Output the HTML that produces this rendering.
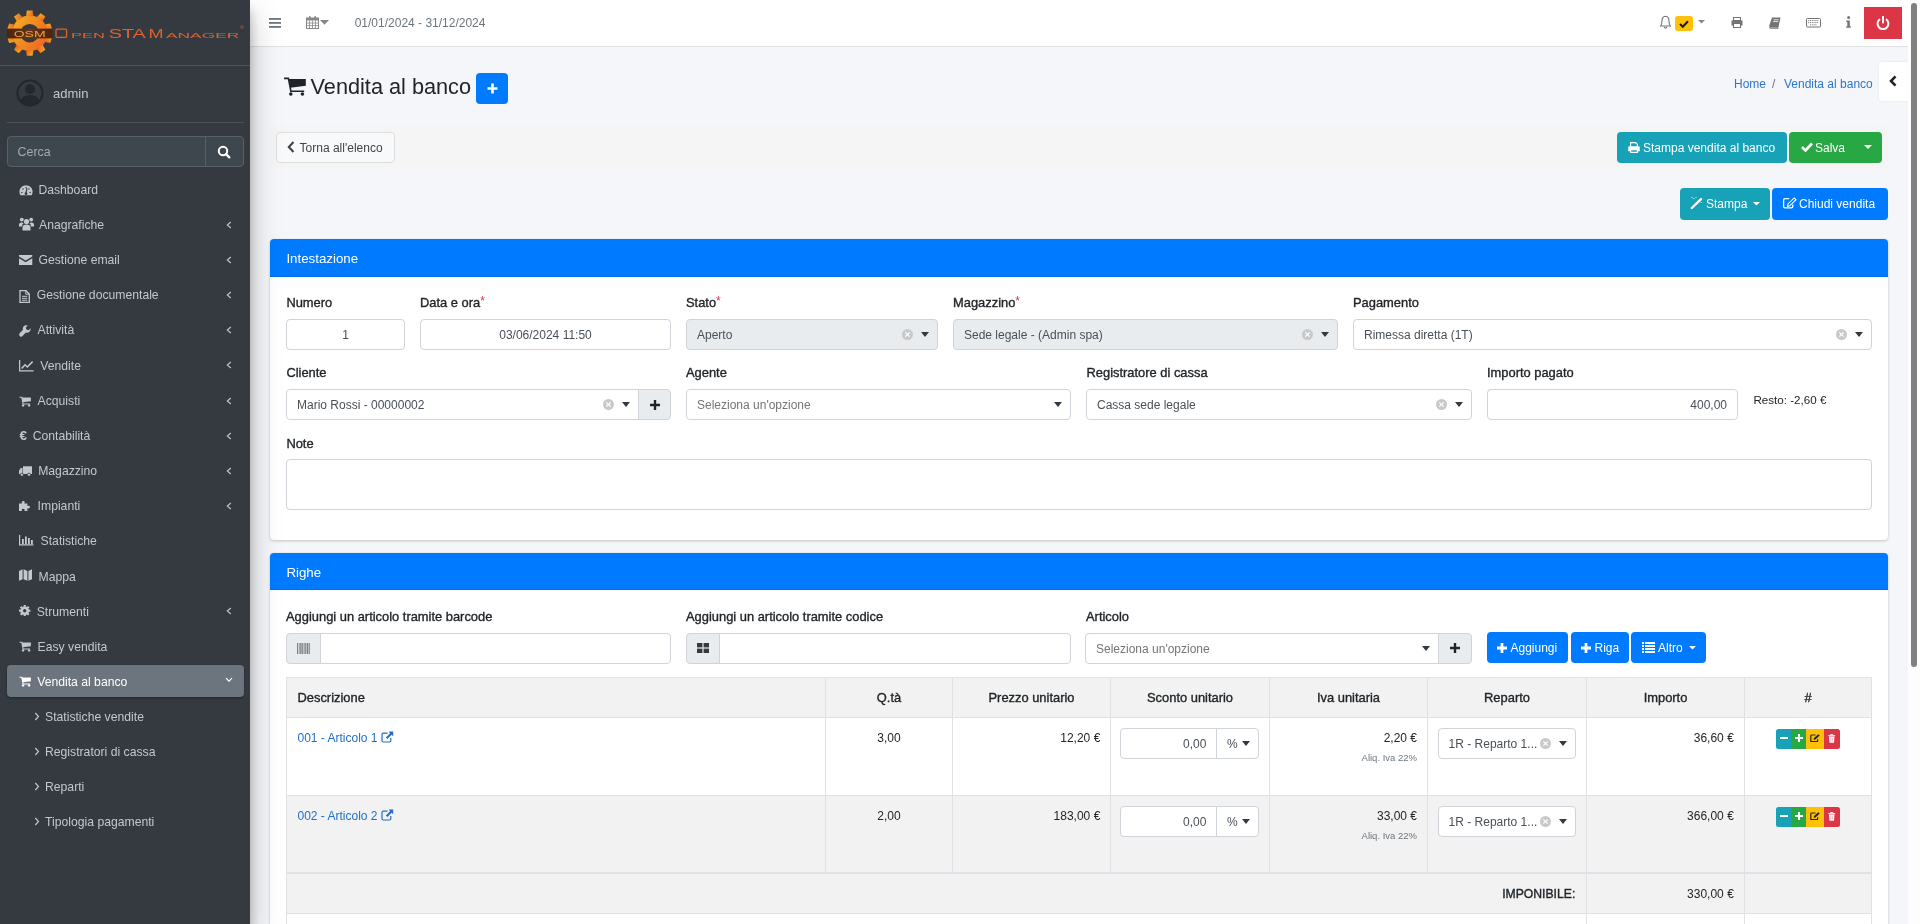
<!DOCTYPE html>
<html><head><meta charset="utf-8"><title>Vendita al banco</title>
<style>
html,body{margin:0;padding:0;width:1920px;height:924px;overflow:hidden;background:#f4f6f9;font-family:"Liberation Sans",sans-serif;}
.t{position:absolute;white-space:nowrap;}
.b{position:absolute;box-sizing:border-box;}
</style></head><body><div style="position:absolute;left:0;top:0;width:1920px;height:924px;will-change:transform">
<div class="b" style="left:0px;top:0px;width:250px;height:924px;background:#343a40;box-shadow:0 14px 28px rgba(0,0,0,.25),0 10px 10px rgba(0,0,0,.22);z-index:5;"></div>
<div class="b" style="left:0px;top:65px;width:250px;height:1px;background:#4b545c;z-index:6;"></div>
<svg class="b" style="left:0px;top:0px;z-index:6" width="250" height="65" viewBox="0 0 250 65">
<defs><linearGradient id="g1" x1="0" y1="0" x2="1" y2="0.6"><stop offset="0" stop-color="#f6b21c"/><stop offset="1" stop-color="#ee6a24"/></linearGradient>
<linearGradient id="g2" x1="0" y1="0" x2="1" y2="0"><stop offset="0" stop-color="#4a2410"/><stop offset=".5" stop-color="#6a3414"/><stop offset="1" stop-color="#4a2410"/></linearGradient></defs>
<g transform="translate(29.7,33.2)">
<g fill="url(#g1)" transform="translate(-29.5,-32.7)"><g transform="translate(29.5,32.7)">
<circle r="17.8"/><path d="M-3.6 -17 L-2.9 -22.6 L2.9 -22.6 L3.6 -17Z" transform="rotate(0)"/><path d="M-3.6 -17 L-2.9 -22.6 L2.9 -22.6 L3.6 -17Z" transform="rotate(36)"/><path d="M-3.6 -17 L-2.9 -22.6 L2.9 -22.6 L3.6 -17Z" transform="rotate(72)"/><path d="M-3.6 -17 L-2.9 -22.6 L2.9 -22.6 L3.6 -17Z" transform="rotate(108)"/><path d="M-3.6 -17 L-2.9 -22.6 L2.9 -22.6 L3.6 -17Z" transform="rotate(144)"/><path d="M-3.6 -17 L-2.9 -22.6 L2.9 -22.6 L3.6 -17Z" transform="rotate(180)"/><path d="M-3.6 -17 L-2.9 -22.6 L2.9 -22.6 L3.6 -17Z" transform="rotate(216)"/><path d="M-3.6 -17 L-2.9 -22.6 L2.9 -22.6 L3.6 -17Z" transform="rotate(252)"/><path d="M-3.6 -17 L-2.9 -22.6 L2.9 -22.6 L3.6 -17Z" transform="rotate(288)"/><path d="M-3.6 -17 L-2.9 -22.6 L2.9 -22.6 L3.6 -17Z" transform="rotate(324)"/>
</g></g>
<circle r="9.3" fill="#343a40"/>
<rect x="-22.7" y="-4.6" width="45.4" height="9.8" fill="url(#g2)"/>
<text x="0" y="4.1" text-anchor="middle" font-family="Liberation Sans" font-size="9.6" fill="#eea040" textLength="32" lengthAdjust="spacingAndGlyphs">OSM</text>
</g>
<g font-family="Liberation Sans" fill="#e4602a" stroke="#e4602a" stroke-width="0">
<rect x="56" y="29.2" width="10.6" height="8.2" rx="1.2" fill="none" stroke-width="1.3"/>
<text x="71" y="37.9" font-size="7.8" textLength="33.8" lengthAdjust="spacingAndGlyphs">PEN</text>
<text x="108.7" y="37.9" font-size="13.7" textLength="37.1" lengthAdjust="spacingAndGlyphs">STA</text>
<text x="148.4" y="37.9" font-size="13.7" textLength="15" lengthAdjust="spacingAndGlyphs">M</text>
<text x="166" y="37.9" font-size="7.8" textLength="73.3" lengthAdjust="spacingAndGlyphs">ANAGER</text>
<circle cx="242" cy="27" r="1.3" fill="none" stroke-width=".5"/>
</g></svg>
<svg class="b" style="left:16px;top:79px;z-index:6" width="28" height="28" viewBox="0 0 28 28">
<circle cx="14" cy="14" r="12.5" fill="none" stroke="#24282c" stroke-width="2.2"/>
<circle cx="14" cy="10.2" r="4.9" fill="#24282c"/>
<path d="M4.6 22.4 Q6 16 14 16 Q22 16 23.4 22.4 Q14 29 4.6 22.4Z" fill="#24282c"/>
</svg>
<div class="t" style="top:87.00px;font-size:13px;line-height:13px;color:#c2c7d0;font-weight:400;left:53px;z-index:6;">admin</div>
<div class="b" style="left:7px;top:122px;width:237px;height:1px;background:#4b545c;z-index:6;"></div>
<div class="b" style="left:7px;top:136px;width:237px;height:31px;background:#3f474e;border:1px solid #56606a;border-radius:4px;z-index:6;"></div>
<div class="b" style="left:205px;top:137px;width:1px;height:29px;background:#56606a;z-index:6;"></div>
<div class="t" style="top:145.50px;font-size:12.4px;line-height:12.4px;color:#a3a9ae;font-weight:400;left:17.6px;z-index:6;">Cerca</div>
<svg class="b" style="left:217px;top:145px;z-index:6" width="14" height="14" viewBox="0 0 14 14">
<circle cx="6" cy="6" r="4.2" fill="none" stroke="#fff" stroke-width="2"/><path d="M9 9 L12.3 12.3" stroke="#fff" stroke-width="2.4" stroke-linecap="round"/></svg>
<div class="b" style="left:7px;top:665px;width:237px;height:32px;background:#6c757d;border-radius:4px;z-index:6;box-shadow:0 1px 3px rgba(0,0,0,.12),0 1px 2px rgba(0,0,0,.24);"></div>
<div class="t" style="top:183.87px;font-size:12.2px;line-height:12.2px;color:#c2c7d0;font-weight:400;left:38.4px;z-index:7;">Dashboard</div>
<div class="t" style="top:219.02px;font-size:12.2px;line-height:12.2px;color:#c2c7d0;font-weight:400;left:39px;z-index:7;">Anagrafiche</div>
<svg class="b" style="left:225.5px;top:220.75px;z-index:7;" width="6" height="8" viewBox="0 0 6 8"><path d="M4.8 1 L1.3 4 L4.8 7" fill="none" stroke="#c2c7d0" stroke-width="1.1"/></svg>
<div class="t" style="top:254.17px;font-size:12.2px;line-height:12.2px;color:#c2c7d0;font-weight:400;left:38.5px;z-index:7;">Gestione email</div>
<svg class="b" style="left:225.5px;top:255.9px;z-index:7;" width="6" height="8" viewBox="0 0 6 8"><path d="M4.8 1 L1.3 4 L4.8 7" fill="none" stroke="#c2c7d0" stroke-width="1.1"/></svg>
<div class="t" style="top:289.32px;font-size:12.2px;line-height:12.2px;color:#c2c7d0;font-weight:400;left:36.7px;z-index:7;">Gestione documentale</div>
<svg class="b" style="left:225.5px;top:291.04999999999995px;z-index:7;" width="6" height="8" viewBox="0 0 6 8"><path d="M4.8 1 L1.3 4 L4.8 7" fill="none" stroke="#c2c7d0" stroke-width="1.1"/></svg>
<div class="t" style="top:324.47px;font-size:12.2px;line-height:12.2px;color:#c2c7d0;font-weight:400;left:37.6px;z-index:7;">Attività</div>
<svg class="b" style="left:225.5px;top:326.19999999999993px;z-index:7;" width="6" height="8" viewBox="0 0 6 8"><path d="M4.8 1 L1.3 4 L4.8 7" fill="none" stroke="#c2c7d0" stroke-width="1.1"/></svg>
<div class="t" style="top:359.62px;font-size:12.2px;line-height:12.2px;color:#c2c7d0;font-weight:400;left:40.3px;z-index:7;">Vendite</div>
<svg class="b" style="left:225.5px;top:361.34999999999997px;z-index:7;" width="6" height="8" viewBox="0 0 6 8"><path d="M4.8 1 L1.3 4 L4.8 7" fill="none" stroke="#c2c7d0" stroke-width="1.1"/></svg>
<div class="t" style="top:394.77px;font-size:12.2px;line-height:12.2px;color:#c2c7d0;font-weight:400;left:37.6px;z-index:7;">Acquisti</div>
<svg class="b" style="left:225.5px;top:396.49999999999994px;z-index:7;" width="6" height="8" viewBox="0 0 6 8"><path d="M4.8 1 L1.3 4 L4.8 7" fill="none" stroke="#c2c7d0" stroke-width="1.1"/></svg>
<div class="t" style="top:429.92px;font-size:12.2px;line-height:12.2px;color:#c2c7d0;font-weight:400;left:32.7px;z-index:7;">Contabilità</div>
<svg class="b" style="left:225.5px;top:431.65px;z-index:7;" width="6" height="8" viewBox="0 0 6 8"><path d="M4.8 1 L1.3 4 L4.8 7" fill="none" stroke="#c2c7d0" stroke-width="1.1"/></svg>
<div class="t" style="top:465.07px;font-size:12.2px;line-height:12.2px;color:#c2c7d0;font-weight:400;left:38.2px;z-index:7;">Magazzino</div>
<svg class="b" style="left:225.5px;top:466.79999999999995px;z-index:7;" width="6" height="8" viewBox="0 0 6 8"><path d="M4.8 1 L1.3 4 L4.8 7" fill="none" stroke="#c2c7d0" stroke-width="1.1"/></svg>
<div class="t" style="top:500.22px;font-size:12.2px;line-height:12.2px;color:#c2c7d0;font-weight:400;left:37.6px;z-index:7;">Impianti</div>
<svg class="b" style="left:225.5px;top:501.94999999999993px;z-index:7;" width="6" height="8" viewBox="0 0 6 8"><path d="M4.8 1 L1.3 4 L4.8 7" fill="none" stroke="#c2c7d0" stroke-width="1.1"/></svg>
<div class="t" style="top:535.37px;font-size:12.2px;line-height:12.2px;color:#c2c7d0;font-weight:400;left:40.6px;z-index:7;">Statistiche</div>
<div class="t" style="top:570.52px;font-size:12.2px;line-height:12.2px;color:#c2c7d0;font-weight:400;left:38.5px;z-index:7;">Mappa</div>
<div class="t" style="top:605.67px;font-size:12.2px;line-height:12.2px;color:#c2c7d0;font-weight:400;left:36.7px;z-index:7;">Strumenti</div>
<svg class="b" style="left:225.5px;top:607.4px;z-index:7;" width="6" height="8" viewBox="0 0 6 8"><path d="M4.8 1 L1.3 4 L4.8 7" fill="none" stroke="#c2c7d0" stroke-width="1.1"/></svg>
<div class="t" style="top:640.82px;font-size:12.2px;line-height:12.2px;color:#c2c7d0;font-weight:400;left:37.6px;z-index:7;">Easy vendita</div>
<div class="t" style="top:675.97px;font-size:12.2px;line-height:12.2px;color:#fff;font-weight:400;left:37.2px;z-index:7;">Vendita al banco</div>
<svg class="b" style="left:224.5px;top:677px;z-index:7;" width="8" height="6" viewBox="0 0 8 6"><path d="M1 1.2 L4 4.2 L7 1.2" fill="none" stroke="#fff" stroke-width="1.2"/></svg>
<div class="t" style="top:710.67px;font-size:12.2px;line-height:12.2px;color:#c2c7d0;font-weight:400;left:45px;z-index:7;">Statistiche vendite</div>
<svg class="b" style="left:34px;top:712px;z-index:7;" width="6" height="9" viewBox="0 0 6 9"><path d="M1.3 1 L4.5 4.5 L1.3 8" fill="none" stroke="#c2c7d0" stroke-width="1.2"/></svg>
<div class="t" style="top:745.67px;font-size:12.2px;line-height:12.2px;color:#c2c7d0;font-weight:400;left:45px;z-index:7;">Registratori di cassa</div>
<svg class="b" style="left:34px;top:747px;z-index:7;" width="6" height="9" viewBox="0 0 6 9"><path d="M1.3 1 L4.5 4.5 L1.3 8" fill="none" stroke="#c2c7d0" stroke-width="1.2"/></svg>
<div class="t" style="top:780.67px;font-size:12.2px;line-height:12.2px;color:#c2c7d0;font-weight:400;left:45px;z-index:7;">Reparti</div>
<svg class="b" style="left:34px;top:782px;z-index:7;" width="6" height="9" viewBox="0 0 6 9"><path d="M1.3 1 L4.5 4.5 L1.3 8" fill="none" stroke="#c2c7d0" stroke-width="1.2"/></svg>
<div class="t" style="top:815.67px;font-size:12.2px;line-height:12.2px;color:#c2c7d0;font-weight:400;left:45px;z-index:7;">Tipologia pagamenti</div>
<svg class="b" style="left:34px;top:817px;z-index:7;" width="6" height="9" viewBox="0 0 6 9"><path d="M1.3 1 L4.5 4.5 L1.3 8" fill="none" stroke="#c2c7d0" stroke-width="1.2"/></svg>
<svg class="b" style="left:19px;top:184.5px;z-index:7;" width="14" height="11" viewBox="0 0 14 11"><path d="M1.4 10.3 A6.6 6.6 0 1 1 12.6 10.3 Z" fill="#c2c7d0"/><path d="M7 8.6 L7.9 3.2" stroke="#343a40" stroke-width="1.2"/><circle cx="7" cy="8.7" r="1.4" fill="#343a40"/><circle cx="2.9" cy="7.6" r=".75" fill="#343a40"/><circle cx="4" cy="3.9" r=".75" fill="#343a40"/><circle cx="11.1" cy="7.6" r=".75" fill="#343a40"/><circle cx="10" cy="3.9" r=".75" fill="#343a40"/><circle cx="7" cy="2.5" r=".7" fill="#343a40"/></svg>
<svg class="b" style="left:19px;top:217px;z-index:7;" width="15" height="14" viewBox="0 0 15 14"><circle cx="7.5" cy="4.5" r="2.6" fill="#c2c7d0"/><circle cx="2.8" cy="2.6" r="1.9" fill="#c2c7d0"/><circle cx="12.2" cy="2.6" r="1.9" fill="#c2c7d0"/><path d="M3.5 13.5 V10.5 Q3.5 7.6 7.5 7.6 Q11.5 7.6 11.5 10.5 V13.5Z" fill="#c2c7d0"/><path d="M0 9.5 V7.2 Q0 5.4 2.8 5.4 Q4 5.4 4.6 6 Q3 7.2 3 9.5Z" fill="#c2c7d0"/><path d="M15 9.5 V7.2 Q15 5.4 12.2 5.4 Q11 5.4 10.4 6 Q12 7.2 12 9.5Z" fill="#c2c7d0"/></svg>
<svg class="b" style="left:19.4px;top:255px;z-index:7;" width="13.3" height="10" viewBox="0 0 13.3 10"><path d="M0 0 H13.3 V1.6 L6.65 5.6 L0 1.6Z" fill="#c2c7d0"/><path d="M0 3.2 L6.65 7.2 L13.3 3.2 V10 H0Z" fill="#c2c7d0"/></svg>
<svg class="b" style="left:19.4px;top:290px;z-index:7;" width="11" height="13" viewBox="0 0 11 13"><path d="M1 0.7 H7 L10.3 4 V12.3 H1Z" fill="none" stroke="#c2c7d0" stroke-width="1.3"/><path d="M6.8 0.7 V4.2 H10.3" fill="none" stroke="#c2c7d0" stroke-width="1"/><path d="M3 6.3 H8.3 M3 8.3 H8.3 M3 10.3 H8.3" stroke="#c2c7d0" stroke-width="1"/></svg>
<svg class="b" style="left:19.4px;top:324.5px;z-index:7;" width="12" height="12" viewBox="0 0 12 12"><path d="M11.6 3.2 L9.6 5.2 L7.4 4.6 L6.8 2.4 L8.8 0.4 Q6.4 -0.4 4.8 1.2 Q3.4 2.6 4 4.8 L0.6 8.2 Q-0.2 9.2 0.6 10.9 Q1.8 12.2 3 11.4 L6.9 7.5 Q9 8.1 10.4 6.7 Q12 5.1 11.6 3.2Z" fill="#c2c7d0"/></svg>
<svg class="b" style="left:19.4px;top:360px;z-index:7;" width="15" height="11.5" viewBox="0 0 15 11.5"><path d="M0.6 0 V10.8 H14.6" fill="none" stroke="#c2c7d0" stroke-width="1.3"/><path d="M2.6 8.6 L6 4.8 L8.3 7 L13.6 1.6" fill="none" stroke="#c2c7d0" stroke-width="1.5"/></svg>
<svg class="b" style="left:19.2px;top:395.5px;z-index:7;" width="12.5" height="11" viewBox="0 0 24 21"><path d="M1 2.4 H5.4 L7.9 15.3 H21.2" fill="none" stroke="#c2c7d0" stroke-width="2.2"/><path d="M5.6 3 H22.8 V9.8 L7.3 11.8Z" fill="#c2c7d0"/><circle cx="7.8" cy="18" r="2.3" fill="#c2c7d0"/><circle cx="19.4" cy="18" r="2.3" fill="#c2c7d0"/></svg>
<div class="t" style="top:429.17px;font-size:13.5px;line-height:13.5px;color:#c2c7d0;font-weight:700;left:19.4px;z-index:7;">€</div>
<svg class="b" style="left:19.4px;top:465.5px;z-index:7;" width="13" height="10.5" viewBox="0 0 13 10.5"><path d="M4 0.3 H13 V8 H4Z" fill="#c2c7d0"/><path d="M0 4.5 L1.8 2 H3.5 V8 H0Z" fill="#c2c7d0"/><circle cx="2.8" cy="8.8" r="1.6" fill="#c2c7d0" stroke="#343a40" stroke-width=".8"/><circle cx="10" cy="8.8" r="1.6" fill="#c2c7d0" stroke="#343a40" stroke-width=".8"/></svg>
<svg class="b" style="left:19.4px;top:500px;z-index:7;" width="12" height="11" viewBox="0 0 12 11"><path d="M0 3.5 H3 Q2.2 1.2 4.2 1 Q6.4 1.2 5.4 3.5 H8.4 V6 Q10.8 5.2 11 7 Q10.8 9 8.4 8.2 V11 H5.4 Q6.2 8.8 4.2 8.8 Q2.2 8.8 3 11 H0Z" fill="#c2c7d0"/></svg>
<svg class="b" style="left:19.2px;top:535px;z-index:7;" width="14.4" height="10.5" viewBox="0 0 14.4 10.5"><path d="M0.6 0 V9.9 H14.4" fill="none" stroke="#c2c7d0" stroke-width="1.2"/><rect x="3" y="4" width="1.8" height="5" fill="#c2c7d0"/><rect x="6" y="1.5" width="1.8" height="7.5" fill="#c2c7d0"/><rect x="9" y="3" width="1.8" height="6" fill="#c2c7d0"/><rect x="12" y="5" width="1.8" height="4" fill="#c2c7d0"/></svg>
<svg class="b" style="left:19.2px;top:569px;z-index:7;" width="13" height="12" viewBox="0 0 13 12"><path d="M0 2 L3.6 0.3 V10.2 L0 11.8Z M4.6 0.3 L8.4 1.9 V11.8 L4.6 10.2Z M9.4 1.9 L13 0.3 V10.2 L9.4 11.8Z" fill="#c2c7d0"/></svg>
<svg class="b" style="left:19.2px;top:604.5px;z-index:7;" width="11.4" height="11.4" viewBox="0 0 11.4 11.4"><g transform="translate(5.7,5.7)"><circle r="4.3" fill="#c2c7d0"/><rect x="-1.1" y="-5.7" width="2.2" height="2.6" fill="#c2c7d0" transform="rotate(0)"/><rect x="-1.1" y="-5.7" width="2.2" height="2.6" fill="#c2c7d0" transform="rotate(45)"/><rect x="-1.1" y="-5.7" width="2.2" height="2.6" fill="#c2c7d0" transform="rotate(90)"/><rect x="-1.1" y="-5.7" width="2.2" height="2.6" fill="#c2c7d0" transform="rotate(135)"/><rect x="-1.1" y="-5.7" width="2.2" height="2.6" fill="#c2c7d0" transform="rotate(180)"/><rect x="-1.1" y="-5.7" width="2.2" height="2.6" fill="#c2c7d0" transform="rotate(225)"/><rect x="-1.1" y="-5.7" width="2.2" height="2.6" fill="#c2c7d0" transform="rotate(270)"/><rect x="-1.1" y="-5.7" width="2.2" height="2.6" fill="#c2c7d0" transform="rotate(315)"/><circle r="1.7" fill="#343a40"/></g></svg>
<svg class="b" style="left:19.2px;top:641.3px;z-index:7;" width="12.5" height="11" viewBox="0 0 24 21"><path d="M1 2.4 H5.4 L7.9 15.3 H21.2" fill="none" stroke="#c2c7d0" stroke-width="2.2"/><path d="M5.6 3 H22.8 V9.8 L7.3 11.8Z" fill="#c2c7d0"/><circle cx="7.8" cy="18" r="2.3" fill="#c2c7d0"/><circle cx="19.4" cy="18" r="2.3" fill="#c2c7d0"/></svg>
<svg class="b" style="left:19.2px;top:676.3px;z-index:7;" width="12.5" height="11" viewBox="0 0 24 21"><path d="M1 2.4 H5.4 L7.9 15.3 H21.2" fill="none" stroke="#fff" stroke-width="2.2"/><path d="M5.6 3 H22.8 V9.8 L7.3 11.8Z" fill="#fff"/><circle cx="7.8" cy="18" r="2.3" fill="#fff"/><circle cx="19.4" cy="18" r="2.3" fill="#fff"/></svg>
<div class="b" style="left:250px;top:0px;width:1670px;height:47px;background:#fff;border-bottom:1px solid #dee2e6;z-index:2;"></div>
<svg class="b" style="left:269px;top:18px;z-index:3;" width="12" height="10" viewBox="0 0 12 10"><rect y="0" width="12" height="1.8" fill="#6c757d"/><rect y="4" width="12" height="1.8" fill="#6c757d"/><rect y="8" width="12" height="1.8" fill="#6c757d"/></svg>
<svg class="b" style="left:306px;top:16px;z-index:3;" width="13" height="13" viewBox="0 0 13 13"><rect x="0.5" y="2" width="12" height="10.5" fill="none" stroke="#888" stroke-width="1"/><rect x="0.5" y="2" width="12" height="2.5" fill="#888"/><rect x="3" y="0.2" width="1.6" height="3" fill="#888"/><rect x="8.4" y="0.2" width="1.6" height="3" fill="#888"/><path d="M0.5 7 H12.5 M0.5 9.6 H12.5 M3.5 4.5 V12.5 M6.5 4.5 V12.5 M9.5 4.5 V12.5" stroke="#888" stroke-width=".8"/></svg>
<svg class="b" style="left:320px;top:20px;z-index:3;" width="9" height="5" viewBox="0 0 9 5"><path d="M0 0 H9 L4.5 4.8Z" fill="#888"/></svg>
<div class="t" style="top:16.84px;font-size:12px;line-height:12px;color:#6c757d;font-weight:400;left:354.7px;z-index:3;">01/01/2024 - 31/12/2024</div>
<svg class="b" style="left:1660px;top:15px;z-index:3;" width="11" height="14" viewBox="0 0 11 14"><path d="M5.5 1.2 Q9 1.4 9 6 Q9 9.2 10.5 11 H0.5 Q2 9.2 2 6 Q2 1.4 5.5 1.2Z" fill="none" stroke="#737373" stroke-width="1.1"/><path d="M4 12.2 Q5.5 14 7 12.2" fill="none" stroke="#737373" stroke-width="1.1"/></svg>
<div class="b" style="left:1675px;top:16px;width:18px;height:15px;background:#ffc107;border-radius:3px;z-index:3;"></div>
<svg class="b" style="left:1679px;top:20px;z-index:3;" width="10" height="8" viewBox="0 0 10 8"><path d="M1 4 L3.8 6.8 L9 1.2" fill="none" stroke="#1c1c1c" stroke-width="2"/></svg>
<svg class="b" style="left:1698px;top:20px;z-index:3;" width="7" height="4" viewBox="0 0 7 4"><path d="M0 0 H7 L3.5 3.6Z" fill="#888"/></svg>
<svg class="b" style="left:1731px;top:17px;z-index:3;" width="12" height="11" viewBox="0 0 12 11"><path d="M2.5 0.5 H9.5 V3.5 H2.5Z" fill="none" stroke="#737373" stroke-width="1.1"/><path d="M0.5 3.5 H11.5 V8.5 H9.5 V6.5 H2.5 V8.5 H0.5Z" fill="#737373"/><path d="M2.5 6.5 H9.5 V10.5 H2.5Z" fill="none" stroke="#737373" stroke-width="1.1"/></svg>
<svg class="b" style="left:1769px;top:17px;z-index:3;" width="12" height="12" viewBox="0 0 12 12"><path d="M3 0.5 H11.5 L9.5 10 H1 Q0 10 0.3 8.6Z" fill="#737373"/><path d="M1 10.2 H9 L9.2 11.3 H1.3 Q0.2 11.2 0.4 10" fill="none" stroke="#737373" stroke-width=".9"/><path d="M4.5 2.8 H9.6 M4.1 4.6 H9.2" stroke="#fff" stroke-width=".8"/></svg>
<svg class="b" style="left:1806px;top:18px;z-index:3;" width="15" height="10" viewBox="0 0 15 10"><rect x="0.5" y="0.5" width="14" height="8.5" rx="1" fill="none" stroke="#737373" stroke-width="1"/><path d="M2.2 2.6 H12.8 M2.2 4.6 H12.8 M4 6.8 H11" stroke="#737373" stroke-width="1" stroke-dasharray="1 .8"/></svg>
<svg class="b" style="left:1846px;top:16px;z-index:3;" width="5" height="12" viewBox="0 0 5 12"><circle cx="2.6" cy="1.5" r="1.5" fill="#737373"/><path d="M0.3 4.5 H3.8 V10.3 H4.8 V11.8 H0.3 V10.3 H1.3 V6 H0.3Z" fill="#737373"/></svg>
<div class="b" style="left:1864px;top:7px;width:38px;height:32px;background:#dc3545;z-index:3;"></div>
<svg class="b" style="left:1876px;top:16px;z-index:3;" width="14" height="14" viewBox="0 0 14 14"><path d="M4 3.2 A5.4 5.4 0 1 0 10 3.2" fill="none" stroke="#fff" stroke-width="2"/><path d="M7 0.8 V6.6" stroke="#fff" stroke-width="2" stroke-linecap="round"/></svg>
<div class="b" style="left:1908px;top:0px;width:12px;height:924px;background:#fdfdfd;z-index:19;"></div>
<div class="b" style="left:1911px;top:3px;width:6px;height:664px;background:#808080;border-radius:3px;z-index:20;"></div>
<svg class="b" style="left:283px;top:76px;" width="24" height="21" viewBox="0 0 24 21"><path d="M1 2.4 H5.4 L7.9 15.3 H21.2" fill="none" stroke="#212529" stroke-width="1.6"/><path d="M5.6 3 H22.8 V9.8 L7.3 11.8Z" fill="#212529"/><circle cx="7.8" cy="18" r="1.8" fill="#212529"/><circle cx="19.4" cy="18" r="1.8" fill="#212529"/></svg>
<div class="t" style="top:75.63px;font-size:21.7px;line-height:21.7px;color:#212529;font-weight:400;left:310.6px;">Vendita al banco</div>
<div class="b" style="left:476px;top:73px;width:32px;height:31px;background:#007bff;border-radius:4px;"></div>
<svg class="b" style="left:487px;top:83px;" width="11" height="11" viewBox="0 0 11 11"><path d="M5.5 0.5 V10.5 M0.5 5.5 H10.5" stroke="#fff" stroke-width="2.6"/></svg>
<div class="t" style="top:77.84px;font-size:12px;line-height:12px;color:#2a78cc;font-weight:400;left:1734px;">Home</div>
<div class="t" style="top:77.84px;font-size:12px;line-height:12px;color:#6c757d;font-weight:400;left:1772px;">/</div>
<div class="t" style="top:77.84px;font-size:12px;line-height:12px;color:#2a78cc;font-weight:400;left:1784px;">Vendita al banco</div>
<div class="b" style="left:1879px;top:62px;width:33px;height:39px;background:#fff;border-radius:4px 0 0 4px;box-shadow:0 0 3px rgba(0,0,0,.08);"></div>
<svg class="b" style="left:1889px;top:75px;" width="8" height="12" viewBox="0 0 8 12"><path d="M6.5 1.4 L2 6 L6.5 10.6" fill="none" stroke="#212529" stroke-width="2.6"/></svg>
<div class="b" style="left:270px;top:125px;width:1618px;height:45px;background:#f5f5f6;"></div>
<div class="b" style="left:276px;top:132px;width:119px;height:31px;background:#f8f9fa;border:1px solid #ddd;border-radius:4px;"></div>
<svg class="b" style="left:287px;top:141px;" width="8" height="12" viewBox="0 0 8 12"><path d="M6.5 1 L1.8 6 L6.5 11" fill="none" stroke="#444" stroke-width="2.1"/></svg>
<div class="t" style="top:141.84px;font-size:12px;line-height:12px;color:#444;font-weight:400;left:299.6px;">Torna all'elenco</div>
<div class="b" style="left:1617px;top:132px;width:170px;height:31px;background:#17a2b8;border-radius:4px;"></div>
<div class="t" style="top:141.84px;font-size:12px;line-height:12px;color:#fff;font-weight:400;left:1643px;">Stampa vendita al banco</div>
<svg class="b" style="left:1628px;top:142px;" width="12" height="11" viewBox="0 0 12 11"><path d="M2.6 4.5 V0.6 H7.6 L9.4 2.4 V4.5" fill="none" stroke="#fff" stroke-width="1.1"/><path d="M0.2 5.6 Q0.2 4.2 1.6 4.2 H10.4 Q11.8 4.2 11.8 5.6 V9.2 H9.4 V7.6 H2.6 V9.2 H0.2Z" fill="#fff"/><path d="M2.6 7.6 H9.4 V10.4 H2.6Z" fill="none" stroke="#fff" stroke-width="1.1"/></svg>
<div class="b" style="left:1789px;top:132px;width:93px;height:31px;background:#28a745;border-radius:4px;"></div>
<div class="t" style="top:141.84px;font-size:12px;line-height:12px;color:#fff;font-weight:400;left:1815px;">Salva</div>
<svg class="b" style="left:1801px;top:142px;" width="12" height="10" viewBox="0 0 12 10"><path d="M1 5 L4.5 8.5 L11 1.5" fill="none" stroke="#fff" stroke-width="2.6"/></svg>
<svg class="b" style="left:1864px;top:145px;" width="8" height="4" viewBox="0 0 8 4"><path d="M0 0 H8 L4 4Z" fill="#fff"/></svg>
<div class="b" style="left:1680px;top:188px;width:90px;height:32px;background:#17a2b8;border-radius:4px;"></div>
<div class="t" style="top:197.84px;font-size:12px;line-height:12px;color:#fff;font-weight:400;left:1706px;">Stampa</div>
<svg class="b" style="left:1690px;top:196px;" width="14" height="14" viewBox="0 0 14 14"><path d="M1.8 12 L11 3.2" stroke="#fff" stroke-width="2.4" stroke-linecap="round"/><circle cx="2" cy="1.6" r=".6" fill="#fff"/><circle cx="4" cy="2.6" r=".6" fill="#fff"/><circle cx="6" cy="1.2" r=".5" fill="#fff"/><circle cx="11.2" cy="6.6" r=".5" fill="#fff"/></svg>
<svg class="b" style="left:1753px;top:202px;" width="7" height="4" viewBox="0 0 7 4"><path d="M0 0 H7 L3.5 3.6Z" fill="#fff"/></svg>
<div class="b" style="left:1772px;top:188px;width:116px;height:32px;background:#007bff;border-radius:4px;"></div>
<div class="t" style="top:197.84px;font-size:12px;line-height:12px;color:#fff;font-weight:400;left:1799px;">Chiudi vendita</div>
<svg class="b" style="left:1782px;top:197px;" width="15" height="12" viewBox="0 0 15 12"><path d="M7.2 1.7 H3 Q1.6 1.7 1.6 3.1 V9.4 Q1.6 10.8 3 10.8 H9.4 Q10.8 10.8 10.8 9.4 V7.4" fill="none" stroke="#fff" stroke-width="1.3"/><path d="M5.6 9.2 L6 6.9 L12.2 0.9 L14 2.7 L7.8 8.8Z" fill="none" stroke="#fff" stroke-width="1.1"/></svg>
<div class="b" style="left:270px;top:239px;width:1618px;height:301px;background:#fff;border-radius:4px;box-shadow:0 0 1px rgba(0,0,0,.125),0 1px 3px rgba(0,0,0,.2);"></div>
<div class="b" style="left:270px;top:239px;width:1618px;height:38px;background:#007bff;border-radius:4px 4px 0 0;border-bottom:1px solid #006ee6;"></div>
<div class="t" style="top:251.94px;font-size:13.3px;line-height:13.3px;color:#fff;font-weight:400;left:286.4px;">Intestazione</div>
<div class="b" style="left:270px;top:553px;width:1618px;height:647px;background:#fff;border-radius:4px;box-shadow:0 0 1px rgba(0,0,0,.125),0 1px 3px rgba(0,0,0,.2);"></div>
<div class="b" style="left:270px;top:553px;width:1618px;height:37px;background:#007bff;border-radius:4px 4px 0 0;border-bottom:1px solid #006ee6;"></div>
<div class="t" style="top:565.74px;font-size:13.3px;line-height:13.3px;color:#fff;font-weight:400;left:286.4px;">Righe</div>
<div class="t" style="top:296.88px;font-size:12.9px;line-height:12.9px;color:#212529;font-weight:400;left:286.4px;-webkit-text-stroke:.35px #212529;">Numero</div>
<div class="b" style="left:286px;top:319px;width:119px;height:31px;background:#fff;border:1px solid #ced4da;border-radius:4px;"></div>
<div class="t" style="top:329.14px;font-size:12px;line-height:12px;color:#495057;font-weight:400;left:295.5px;width:100px;text-align:center;">1</div>
<div class="t" style="top:296.88px;font-size:12.9px;line-height:12.9px;color:#212529;font-weight:400;left:420px;-webkit-text-stroke:.35px #212529;">Data e ora</div>
<div class="t" style="left:420px;top:296.88px;font-size:12.9px;line-height:12.9px;font-weight:400;visibility:hidden">Data e ora<span style="visibility:visible;color:#dc3545;font-size:12px;position:relative;top:-1.5px;font-weight:400;-webkit-text-stroke:0">*</span></div>
<div class="b" style="left:420px;top:319px;width:251px;height:31px;background:#fff;border:1px solid #ced4da;border-radius:4px;"></div>
<div class="t" style="top:329.14px;font-size:12px;line-height:12px;color:#495057;font-weight:400;left:425.5px;width:240px;text-align:center;">03/06/2024 11:50</div>
<div class="t" style="top:296.88px;font-size:12.9px;line-height:12.9px;color:#212529;font-weight:400;left:686px;-webkit-text-stroke:.35px #212529;">Stato</div>
<div class="t" style="left:686px;top:296.88px;font-size:12.9px;line-height:12.9px;font-weight:400;visibility:hidden">Stato<span style="visibility:visible;color:#dc3545;font-size:12px;position:relative;top:-1.5px;font-weight:400;-webkit-text-stroke:0">*</span></div>
<div class="b" style="left:686px;top:319px;width:252px;height:31px;background:#e9ecef;border:1px solid #ced4da;border-radius:4px;"></div>
<div class="t" style="top:328.74px;font-size:12px;line-height:12px;color:#495057;font-weight:400;left:697px;">Aperto</div>
<svg class="b" style="left:901.5px;top:329.3px;" width="11" height="11" viewBox="0 0 11 11"><circle cx="5.5" cy="5.5" r="5.5" fill="#c9c9c9"/><path d="M3.3 3.3 L7.7 7.7 M7.7 3.3 L3.3 7.7" stroke="#fff" stroke-width="1.2"/></svg>
<svg class="b" style="left:921px;top:332.3px;" width="8" height="5" viewBox="0 0 8 5"><path d="M0 0 H8 L4 5Z" fill="#343a40"/></svg>
<div class="t" style="top:296.88px;font-size:12.9px;line-height:12.9px;color:#212529;font-weight:400;left:953px;-webkit-text-stroke:.35px #212529;">Magazzino</div>
<div class="t" style="left:953px;top:296.88px;font-size:12.9px;line-height:12.9px;font-weight:400;visibility:hidden">Magazzino<span style="visibility:visible;color:#dc3545;font-size:12px;position:relative;top:-1.5px;font-weight:400;-webkit-text-stroke:0">*</span></div>
<div class="b" style="left:953px;top:319px;width:385px;height:31px;background:#e9ecef;border:1px solid #ced4da;border-radius:4px;"></div>
<div class="t" style="top:328.74px;font-size:12px;line-height:12px;color:#495057;font-weight:400;left:964px;">Sede legale - (Admin spa)</div>
<svg class="b" style="left:1301.5px;top:329.3px;" width="11" height="11" viewBox="0 0 11 11"><circle cx="5.5" cy="5.5" r="5.5" fill="#c9c9c9"/><path d="M3.3 3.3 L7.7 7.7 M7.7 3.3 L3.3 7.7" stroke="#fff" stroke-width="1.2"/></svg>
<svg class="b" style="left:1321px;top:332.3px;" width="8" height="5" viewBox="0 0 8 5"><path d="M0 0 H8 L4 5Z" fill="#343a40"/></svg>
<div class="t" style="top:296.88px;font-size:12.9px;line-height:12.9px;color:#212529;font-weight:400;left:1353px;-webkit-text-stroke:.35px #212529;">Pagamento</div>
<div class="b" style="left:1353px;top:319px;width:519px;height:31px;background:#fff;border:1px solid #ced4da;border-radius:4px;"></div>
<div class="t" style="top:328.74px;font-size:12px;line-height:12px;color:#495057;font-weight:400;left:1364px;">Rimessa diretta (1T)</div>
<svg class="b" style="left:1835.5px;top:329.3px;" width="11" height="11" viewBox="0 0 11 11"><circle cx="5.5" cy="5.5" r="5.5" fill="#c9c9c9"/><path d="M3.3 3.3 L7.7 7.7 M7.7 3.3 L3.3 7.7" stroke="#fff" stroke-width="1.2"/></svg>
<svg class="b" style="left:1855px;top:332.3px;" width="8" height="5" viewBox="0 0 8 5"><path d="M0 0 H8 L4 5Z" fill="#343a40"/></svg>
<div class="t" style="top:366.58px;font-size:12.9px;line-height:12.9px;color:#212529;font-weight:400;left:286.4px;-webkit-text-stroke:.35px #212529;">Cliente</div>
<div class="b" style="left:286px;top:389px;width:353px;height:31px;background:#fff;border:1px solid #ced4da;border-radius:4px 0 0 4px;"></div>
<div class="t" style="top:398.74px;font-size:12px;line-height:12px;color:#495057;font-weight:400;left:297px;">Mario Rossi - 00000002</div>
<svg class="b" style="left:602.5px;top:399.3px;" width="11" height="11" viewBox="0 0 11 11"><circle cx="5.5" cy="5.5" r="5.5" fill="#c9c9c9"/><path d="M3.3 3.3 L7.7 7.7 M7.7 3.3 L3.3 7.7" stroke="#fff" stroke-width="1.2"/></svg>
<svg class="b" style="left:622px;top:402.3px;" width="8" height="5" viewBox="0 0 8 5"><path d="M0 0 H8 L4 5Z" fill="#343a40"/></svg>
<div class="b" style="left:638px;top:389px;width:33px;height:31px;background:#e9ecef;border:1px solid #ced4da;border-radius:0 4px 4px 0;"></div>
<svg class="b" style="left:650px;top:400px;" width="10" height="10" viewBox="0 0 10 10"><path d="M5 0 V10 M0 5 H10" stroke="#212529" stroke-width="2.4"/></svg>
<div class="t" style="top:366.58px;font-size:12.9px;line-height:12.9px;color:#212529;font-weight:400;left:686px;-webkit-text-stroke:.35px #212529;">Agente</div>
<div class="b" style="left:686px;top:389px;width:385px;height:31px;background:#fff;border:1px solid #ced4da;border-radius:4px;"></div>
<div class="t" style="top:398.74px;font-size:12px;line-height:12px;color:#757575;font-weight:400;left:697px;">Seleziona un'opzione</div>
<svg class="b" style="left:1054px;top:402.3px;" width="8" height="5" viewBox="0 0 8 5"><path d="M0 0 H8 L4 5Z" fill="#343a40"/></svg>
<div class="t" style="top:366.58px;font-size:12.9px;line-height:12.9px;color:#212529;font-weight:400;left:1086.5px;-webkit-text-stroke:.35px #212529;">Registratore di cassa</div>
<div class="b" style="left:1086px;top:389px;width:386px;height:31px;background:#fff;border:1px solid #ced4da;border-radius:4px;"></div>
<div class="t" style="top:398.74px;font-size:12px;line-height:12px;color:#495057;font-weight:400;left:1097px;">Cassa sede legale</div>
<svg class="b" style="left:1435.5px;top:399.3px;" width="11" height="11" viewBox="0 0 11 11"><circle cx="5.5" cy="5.5" r="5.5" fill="#c9c9c9"/><path d="M3.3 3.3 L7.7 7.7 M7.7 3.3 L3.3 7.7" stroke="#fff" stroke-width="1.2"/></svg>
<svg class="b" style="left:1455px;top:402.3px;" width="8" height="5" viewBox="0 0 8 5"><path d="M0 0 H8 L4 5Z" fill="#343a40"/></svg>
<div class="t" style="top:366.58px;font-size:12.9px;line-height:12.9px;color:#212529;font-weight:400;left:1487px;-webkit-text-stroke:.35px #212529;">Importo pagato</div>
<div class="b" style="left:1487px;top:389px;width:251px;height:31px;background:#fff;border:1px solid #ced4da;border-radius:4px;"></div>
<div class="t" style="top:398.64px;font-size:12px;line-height:12px;color:#495057;font-weight:400;right:193px;text-align:right;">400,00</div>
<div class="t" style="top:393.68px;font-size:11.6px;line-height:11.6px;color:#212529;font-weight:400;left:1753.5px;">Resto: -2,60 €</div>
<div class="t" style="top:437.58px;font-size:12.9px;line-height:12.9px;color:#212529;font-weight:400;left:286.4px;-webkit-text-stroke:.35px #212529;">Note</div>
<div class="b" style="left:286px;top:459px;width:1586px;height:51px;background:#fff;border:1px solid #ced4da;border-radius:4px;"></div>
<div class="t" style="top:610.58px;font-size:12.9px;line-height:12.9px;color:#212529;font-weight:400;left:286px;-webkit-text-stroke:.35px #212529;">Aggiungi un articolo tramite barcode</div>
<div class="t" style="top:610.58px;font-size:12.9px;line-height:12.9px;color:#212529;font-weight:400;left:686px;-webkit-text-stroke:.35px #212529;">Aggiungi un articolo tramite codice</div>
<div class="t" style="top:610.58px;font-size:12.9px;line-height:12.9px;color:#212529;font-weight:400;left:1086px;-webkit-text-stroke:.35px #212529;">Articolo</div>
<div class="b" style="left:286px;top:633px;width:35px;height:31px;background:#e9ecef;border:1px solid #ced4da;border-radius:4px 0 0 4px;"></div>
<div class="b" style="left:320px;top:633px;width:351px;height:31px;background:#fff;border:1px solid #ced4da;border-radius:0 4px 4px 0;"></div>
<svg class="b" style="left:297px;top:643px;" width="13" height="11" viewBox="0 0 13 11"><rect x="0" y="0" width="1" height="11" fill="#7a8087"/><rect x="1.8" y="0" width="0.8" height="11" fill="#7a8087"/><rect x="3.2" y="0" width="1.4" height="11" fill="#7a8087"/><rect x="5.2" y="0" width="0.8" height="11" fill="#7a8087"/><rect x="6.6" y="0" width="1" height="11" fill="#7a8087"/><rect x="8.2" y="0" width="0.8" height="11" fill="#7a8087"/><rect x="9.6" y="0" width="1.4" height="11" fill="#7a8087"/><rect x="11.6" y="0" width="0.8" height="11" fill="#7a8087"/><rect x="12.3" y="0" width="0.7" height="11" fill="#7a8087"/></svg>
<div class="b" style="left:686px;top:633px;width:34px;height:31px;background:#e9ecef;border:1px solid #ced4da;border-radius:4px 0 0 4px;"></div>
<div class="b" style="left:719px;top:633px;width:352px;height:31px;background:#fff;border:1px solid #ced4da;border-radius:0 4px 4px 0;"></div>
<svg class="b" style="left:697px;top:643px;" width="12" height="10" viewBox="0 0 12 10"><rect x="0" y="0" width="5.4" height="4.4" fill="#343a40"/><rect x="6.6" y="0" width="5.4" height="4.4" fill="#343a40"/><rect x="0" y="5.6" width="5.4" height="4.4" fill="#343a40"/><rect x="6.6" y="5.6" width="5.4" height="4.4" fill="#343a40"/></svg>
<div class="b" style="left:1085px;top:633px;width:354px;height:31px;background:#fff;border:1px solid #ced4da;border-radius:4px 0 0 4px;"></div>
<div class="t" style="top:642.74px;font-size:12px;line-height:12px;color:#757575;font-weight:400;left:1096px;">Seleziona un'opzione</div>
<svg class="b" style="left:1422px;top:646.3px;" width="8" height="5" viewBox="0 0 8 5"><path d="M0 0 H8 L4 5Z" fill="#343a40"/></svg>
<div class="b" style="left:1438px;top:633px;width:34px;height:31px;background:#e9ecef;border:1px solid #ced4da;border-radius:0 4px 4px 0;"></div>
<svg class="b" style="left:1450px;top:643px;" width="10" height="10" viewBox="0 0 10 10"><path d="M5 0 V10 M0 5 H10" stroke="#212529" stroke-width="2.4"/></svg>
<div class="b" style="left:1487px;top:632px;width:81px;height:31px;background:#007bff;border-radius:4px;"></div>
<div class="t" style="top:642.34px;font-size:12px;line-height:12px;color:#fff;font-weight:400;left:1510.5px;">Aggiungi</div>
<svg class="b" style="left:1497px;top:642.5px;" width="10" height="10" viewBox="0 0 10 10"><path d="M5.0 0 V10 M0 5.0 H10" stroke="#fff" stroke-width="2.8"/></svg>
<div class="b" style="left:1571px;top:632px;width:58px;height:31px;background:#007bff;border-radius:4px;"></div>
<div class="t" style="top:642.34px;font-size:12px;line-height:12px;color:#fff;font-weight:400;left:1594.5px;">Riga</div>
<svg class="b" style="left:1581px;top:642.5px;" width="10" height="10" viewBox="0 0 10 10"><path d="M5.0 0 V10 M0 5.0 H10" stroke="#fff" stroke-width="2.8"/></svg>
<div class="b" style="left:1631px;top:632px;width:75px;height:31px;background:#007bff;border-radius:4px;"></div>
<div class="t" style="top:642.34px;font-size:12px;line-height:12px;color:#fff;font-weight:400;left:1658px;">Altro</div>
<svg class="b" style="left:1642px;top:642px;" width="13" height="11" viewBox="0 0 13 11"><path d="M0 1 H2 M0 4 H2 M0 7 H2 M0 10 H2 M3 1 H13 M3 4 H13 M3 7 H13 M3 10 H13" stroke="#fff" stroke-width="1.8"/></svg>
<svg class="b" style="left:1689px;top:646px;" width="7" height="4" viewBox="0 0 7 4"><path d="M0 0 H7 L3.5 3.6Z" fill="#fff"/></svg>
<div class="b" style="left:286px;top:677px;width:1586px;height:41px;background:#f2f2f2;"></div>
<div class="b" style="left:286px;top:718px;width:1586px;height:78px;background:#fff;"></div>
<div class="b" style="left:286px;top:796px;width:1586px;height:77px;background:#f2f2f2;"></div>
<div class="b" style="left:286px;top:873px;width:1586px;height:41px;background:#f2f2f2;"></div>
<div class="b" style="left:286px;top:914px;width:1586px;height:10px;background:#fff;"></div>
<div class="b" style="left:286px;top:677px;width:1586px;height:1px;background:#dee2e6;"></div>
<div class="b" style="left:286px;top:717px;width:1586px;height:1px;background:#dee2e6;"></div>
<div class="b" style="left:286px;top:795px;width:1586px;height:1px;background:#dee2e6;"></div>
<div class="b" style="left:286px;top:872px;width:1586px;height:2px;background:#dee2e6;"></div>
<div class="b" style="left:286px;top:913px;width:1586px;height:1px;background:#dee2e6;"></div>
<div class="b" style="left:286px;top:677px;width:1px;height:196px;background:#dee2e6;"></div>
<div class="b" style="left:825px;top:677px;width:1px;height:196px;background:#dee2e6;"></div>
<div class="b" style="left:952px;top:677px;width:1px;height:196px;background:#dee2e6;"></div>
<div class="b" style="left:1110px;top:677px;width:1px;height:196px;background:#dee2e6;"></div>
<div class="b" style="left:1269px;top:677px;width:1px;height:196px;background:#dee2e6;"></div>
<div class="b" style="left:1427px;top:677px;width:1px;height:196px;background:#dee2e6;"></div>
<div class="b" style="left:1586px;top:677px;width:1px;height:196px;background:#dee2e6;"></div>
<div class="b" style="left:1744px;top:677px;width:1px;height:196px;background:#dee2e6;"></div>
<div class="b" style="left:1871px;top:677px;width:1px;height:196px;background:#dee2e6;"></div>
<div class="b" style="left:286px;top:873px;width:1px;height:51px;background:#dee2e6;"></div>
<div class="b" style="left:1586px;top:873px;width:1px;height:51px;background:#dee2e6;"></div>
<div class="b" style="left:1744px;top:873px;width:1px;height:51px;background:#dee2e6;"></div>
<div class="b" style="left:1871px;top:873px;width:1px;height:51px;background:#dee2e6;"></div>
<div class="t" style="top:691.68px;font-size:12.9px;line-height:12.9px;color:#212529;font-weight:400;left:297.5px;-webkit-text-stroke:.35px #212529;">Descrizione</div>
<div class="t" style="top:691.68px;font-size:12.9px;line-height:12.9px;color:#212529;font-weight:400;left:789.0px;width:200px;text-align:center;-webkit-text-stroke:.35px #212529;">Q.tà</div>
<div class="t" style="top:691.68px;font-size:12.9px;line-height:12.9px;color:#212529;font-weight:400;left:931.5px;width:200px;text-align:center;-webkit-text-stroke:.35px #212529;">Prezzo unitario</div>
<div class="t" style="top:691.68px;font-size:12.9px;line-height:12.9px;color:#212529;font-weight:400;left:1090.0px;width:200px;text-align:center;-webkit-text-stroke:.35px #212529;">Sconto unitario</div>
<div class="t" style="top:691.68px;font-size:12.9px;line-height:12.9px;color:#212529;font-weight:400;left:1248.5px;width:200px;text-align:center;-webkit-text-stroke:.35px #212529;">Iva unitaria</div>
<div class="t" style="top:691.68px;font-size:12.9px;line-height:12.9px;color:#212529;font-weight:400;left:1407.0px;width:200px;text-align:center;-webkit-text-stroke:.35px #212529;">Reparto</div>
<div class="t" style="top:691.68px;font-size:12.9px;line-height:12.9px;color:#212529;font-weight:400;left:1565.5px;width:200px;text-align:center;-webkit-text-stroke:.35px #212529;">Importo</div>
<div class="t" style="top:691.68px;font-size:12.9px;line-height:12.9px;color:#212529;font-weight:400;left:1708.0px;width:200px;text-align:center;-webkit-text-stroke:.35px #212529;">#</div>
<div class="t" style="left:297.5px;top:732.04px;font-size:12px;line-height:12px;color:#1f6fc8">001 - Articolo 1</div>
<svg class="b" style="left:380.5px;top:731.2px;" width="13" height="12" viewBox="0 0 13 12"><path d="M6.5 2.2 H2.2 Q1 2.2 1 3.4 V9.8 Q1 11 2.2 11 H8.6 Q9.8 11 9.8 9.8 V7" fill="none" stroke="#1f6fc8" stroke-width="1.2"/><path d="M7.6 0.6 H12.2 V5.2 L10.6 3.8 L6.4 8 L4.9 6.5 L9.1 2.3Z" fill="#1f6fc8"/></svg>
<div class="t" style="top:732.04px;font-size:12px;line-height:12px;color:#212529;font-weight:400;left:839.0px;width:100px;text-align:center;">3,00</div>
<div class="t" style="top:732.04px;font-size:12px;line-height:12px;color:#212529;font-weight:400;right:819.7px;text-align:right;">12,20 €</div>
<div class="b" style="left:1120px;top:728px;width:97px;height:31px;background:#fff;border:1px solid #ced4da;border-radius:4px 0 0 4px;"></div>
<div class="b" style="left:1216px;top:728px;width:43px;height:31px;background:#fff;border:1px solid #ced4da;border-radius:0 4px 4px 0;"></div>
<div class="t" style="top:738.24px;font-size:12px;line-height:12px;color:#495057;font-weight:400;right:713.5999999999999px;text-align:right;">0,00</div>
<div class="t" style="top:738.24px;font-size:12px;line-height:12px;color:#495057;font-weight:400;left:1227px;">%</div>
<svg class="b" style="left:1242px;top:741.0px;" width="8" height="5" viewBox="0 0 8 5"><path d="M0 0 H8 L4 5Z" fill="#343a40"/></svg>
<div class="t" style="top:732.04px;font-size:12px;line-height:12px;color:#212529;font-weight:400;right:503px;text-align:right;">2,20 €</div>
<div class="t" style="top:753.16px;font-size:9.5px;line-height:9.5px;color:#6c757d;font-weight:400;right:503px;text-align:right;">Aliq. Iva 22%</div>
<div class="b" style="left:1438px;top:728px;width:138px;height:31px;background:#fff;border:1px solid #ced4da;border-radius:4px;"></div>
<div class="t" style="top:738.24px;font-size:12px;line-height:12px;color:#495057;font-weight:400;left:1448.6px;">1R - Reparto 1...</div>
<svg class="b" style="left:1539.8px;top:738.0px;" width="11" height="11" viewBox="0 0 11 11"><circle cx="5.5" cy="5.5" r="5.5" fill="#c9c9c9"/><path d="M3.3 3.3 L7.7 7.7 M7.7 3.3 L3.3 7.7" stroke="#fff" stroke-width="1.2"/></svg>
<svg class="b" style="left:1559px;top:741.0px;" width="8" height="5" viewBox="0 0 8 5"><path d="M0 0 H8 L4 5Z" fill="#343a40"/></svg>
<div class="t" style="top:732.04px;font-size:12px;line-height:12px;color:#212529;font-weight:400;right:186.20000000000005px;text-align:right;">36,60 €</div>
<div class="b" style="left:1776px;top:729px;width:15px;height:19.5px;background:#17a2b8;border-radius:2.5px 0 0 2.5px;"></div>
<div class="b" style="left:1791px;top:729px;width:15px;height:19.5px;background:#28a745;border-radius:0;"></div>
<div class="b" style="left:1806px;top:729px;width:18px;height:19.5px;background:#ffc107;border-radius:0;"></div>
<div class="b" style="left:1824px;top:729px;width:16px;height:19.5px;background:#dc3545;border-radius:0 2.5px 2.5px 0;"></div>
<svg class="b" style="left:1780px;top:737.2px;" width="8" height="2" viewBox="0 0 8 2"><rect width="8" height="2" fill="#fff"/></svg>
<svg class="b" style="left:1795px;top:733.6px;" width="8" height="8" viewBox="0 0 8 8"><path d="M4.0 0 V8 M0 4.0 H8" stroke="#fff" stroke-width="2"/></svg>
<svg class="b" style="left:1810px;top:733.8px;" width="10" height="8.5" viewBox="0 0 10 8.5"><path d="M5.5 1 H1.6 Q0.8 1 0.8 1.8 V6.9 Q0.8 7.7 1.6 7.7 H6.8 Q7.6 7.7 7.6 6.9 V5.2" fill="none" stroke="#212529" stroke-width="1.2"/><path d="M3.6 5.8 L4 4.1 L8.3 0.2 L9.7 1.5 L5.5 5.6Z" fill="#212529"/></svg>
<svg class="b" style="left:1828px;top:733.8px;" width="7.5" height="9" viewBox="0 0 7.5 9"><path d="M0.3 1.7 H7.2 M2.6 1.7 V0.6 H4.9 V1.7" fill="none" stroke="#fff" stroke-width="1"/><path d="M1 2.6 H6.5 L6 8.8 H1.5Z" fill="#fff"/><path d="M2.9 3.8 V7.6 M4.6 3.8 V7.6" stroke="#f0a0a8" stroke-width=".7"/></svg>
<div class="t" style="left:297.5px;top:809.84px;font-size:12px;line-height:12px;color:#1f6fc8">002 - Articolo 2</div>
<svg class="b" style="left:380.5px;top:809px;" width="13" height="12" viewBox="0 0 13 12"><path d="M6.5 2.2 H2.2 Q1 2.2 1 3.4 V9.8 Q1 11 2.2 11 H8.6 Q9.8 11 9.8 9.8 V7" fill="none" stroke="#1f6fc8" stroke-width="1.2"/><path d="M7.6 0.6 H12.2 V5.2 L10.6 3.8 L6.4 8 L4.9 6.5 L9.1 2.3Z" fill="#1f6fc8"/></svg>
<div class="t" style="top:809.84px;font-size:12px;line-height:12px;color:#212529;font-weight:400;left:839.0px;width:100px;text-align:center;">2,00</div>
<div class="t" style="top:809.84px;font-size:12px;line-height:12px;color:#212529;font-weight:400;right:819.7px;text-align:right;">183,00 €</div>
<div class="b" style="left:1120px;top:805.5px;width:97px;height:31.0px;background:#fff;border:1px solid #ced4da;border-radius:4px 0 0 4px;"></div>
<div class="b" style="left:1216px;top:805.5px;width:43px;height:31.0px;background:#fff;border:1px solid #ced4da;border-radius:0 4px 4px 0;"></div>
<div class="t" style="top:815.84px;font-size:12px;line-height:12px;color:#495057;font-weight:400;right:713.5999999999999px;text-align:right;">0,00</div>
<div class="t" style="top:815.84px;font-size:12px;line-height:12px;color:#495057;font-weight:400;left:1227px;">%</div>
<svg class="b" style="left:1242px;top:818.5px;" width="8" height="5" viewBox="0 0 8 5"><path d="M0 0 H8 L4 5Z" fill="#343a40"/></svg>
<div class="t" style="top:809.84px;font-size:12px;line-height:12px;color:#212529;font-weight:400;right:503px;text-align:right;">33,00 €</div>
<div class="t" style="top:830.96px;font-size:9.5px;line-height:9.5px;color:#6c757d;font-weight:400;right:503px;text-align:right;">Aliq. Iva 22%</div>
<div class="b" style="left:1438px;top:805.5px;width:138px;height:31.0px;background:#fff;border:1px solid #ced4da;border-radius:4px;"></div>
<div class="t" style="top:815.84px;font-size:12px;line-height:12px;color:#495057;font-weight:400;left:1448.6px;">1R - Reparto 1...</div>
<svg class="b" style="left:1539.8px;top:815.5px;" width="11" height="11" viewBox="0 0 11 11"><circle cx="5.5" cy="5.5" r="5.5" fill="#c9c9c9"/><path d="M3.3 3.3 L7.7 7.7 M7.7 3.3 L3.3 7.7" stroke="#fff" stroke-width="1.2"/></svg>
<svg class="b" style="left:1559px;top:818.5px;" width="8" height="5" viewBox="0 0 8 5"><path d="M0 0 H8 L4 5Z" fill="#343a40"/></svg>
<div class="t" style="top:809.84px;font-size:12px;line-height:12px;color:#212529;font-weight:400;right:186.20000000000005px;text-align:right;">366,00 €</div>
<div class="b" style="left:1776px;top:807px;width:15px;height:19.5px;background:#17a2b8;border-radius:2.5px 0 0 2.5px;"></div>
<div class="b" style="left:1791px;top:807px;width:15px;height:19.5px;background:#28a745;border-radius:0;"></div>
<div class="b" style="left:1806px;top:807px;width:18px;height:19.5px;background:#ffc107;border-radius:0;"></div>
<div class="b" style="left:1824px;top:807px;width:16px;height:19.5px;background:#dc3545;border-radius:0 2.5px 2.5px 0;"></div>
<svg class="b" style="left:1780px;top:815.2px;" width="8" height="2" viewBox="0 0 8 2"><rect width="8" height="2" fill="#fff"/></svg>
<svg class="b" style="left:1795px;top:811.6px;" width="8" height="8" viewBox="0 0 8 8"><path d="M4.0 0 V8 M0 4.0 H8" stroke="#fff" stroke-width="2"/></svg>
<svg class="b" style="left:1810px;top:811.8px;" width="10" height="8.5" viewBox="0 0 10 8.5"><path d="M5.5 1 H1.6 Q0.8 1 0.8 1.8 V6.9 Q0.8 7.7 1.6 7.7 H6.8 Q7.6 7.7 7.6 6.9 V5.2" fill="none" stroke="#212529" stroke-width="1.2"/><path d="M3.6 5.8 L4 4.1 L8.3 0.2 L9.7 1.5 L5.5 5.6Z" fill="#212529"/></svg>
<svg class="b" style="left:1828px;top:811.8px;" width="7.5" height="9" viewBox="0 0 7.5 9"><path d="M0.3 1.7 H7.2 M2.6 1.7 V0.6 H4.9 V1.7" fill="none" stroke="#fff" stroke-width="1"/><path d="M1 2.6 H6.5 L6 8.8 H1.5Z" fill="#fff"/><path d="M2.9 3.8 V7.6 M4.6 3.8 V7.6" stroke="#f0a0a8" stroke-width=".7"/></svg>
<div class="t" style="top:887.67px;font-size:12.2px;line-height:12.2px;color:#212529;font-weight:400;right:344.70000000000005px;text-align:right;-webkit-text-stroke:.35px #212529;">IMPONIBILE:</div>
<div class="t" style="top:887.84px;font-size:12px;line-height:12px;color:#212529;font-weight:400;right:186.20000000000005px;text-align:right;">330,00 €</div>
</div></body></html>
